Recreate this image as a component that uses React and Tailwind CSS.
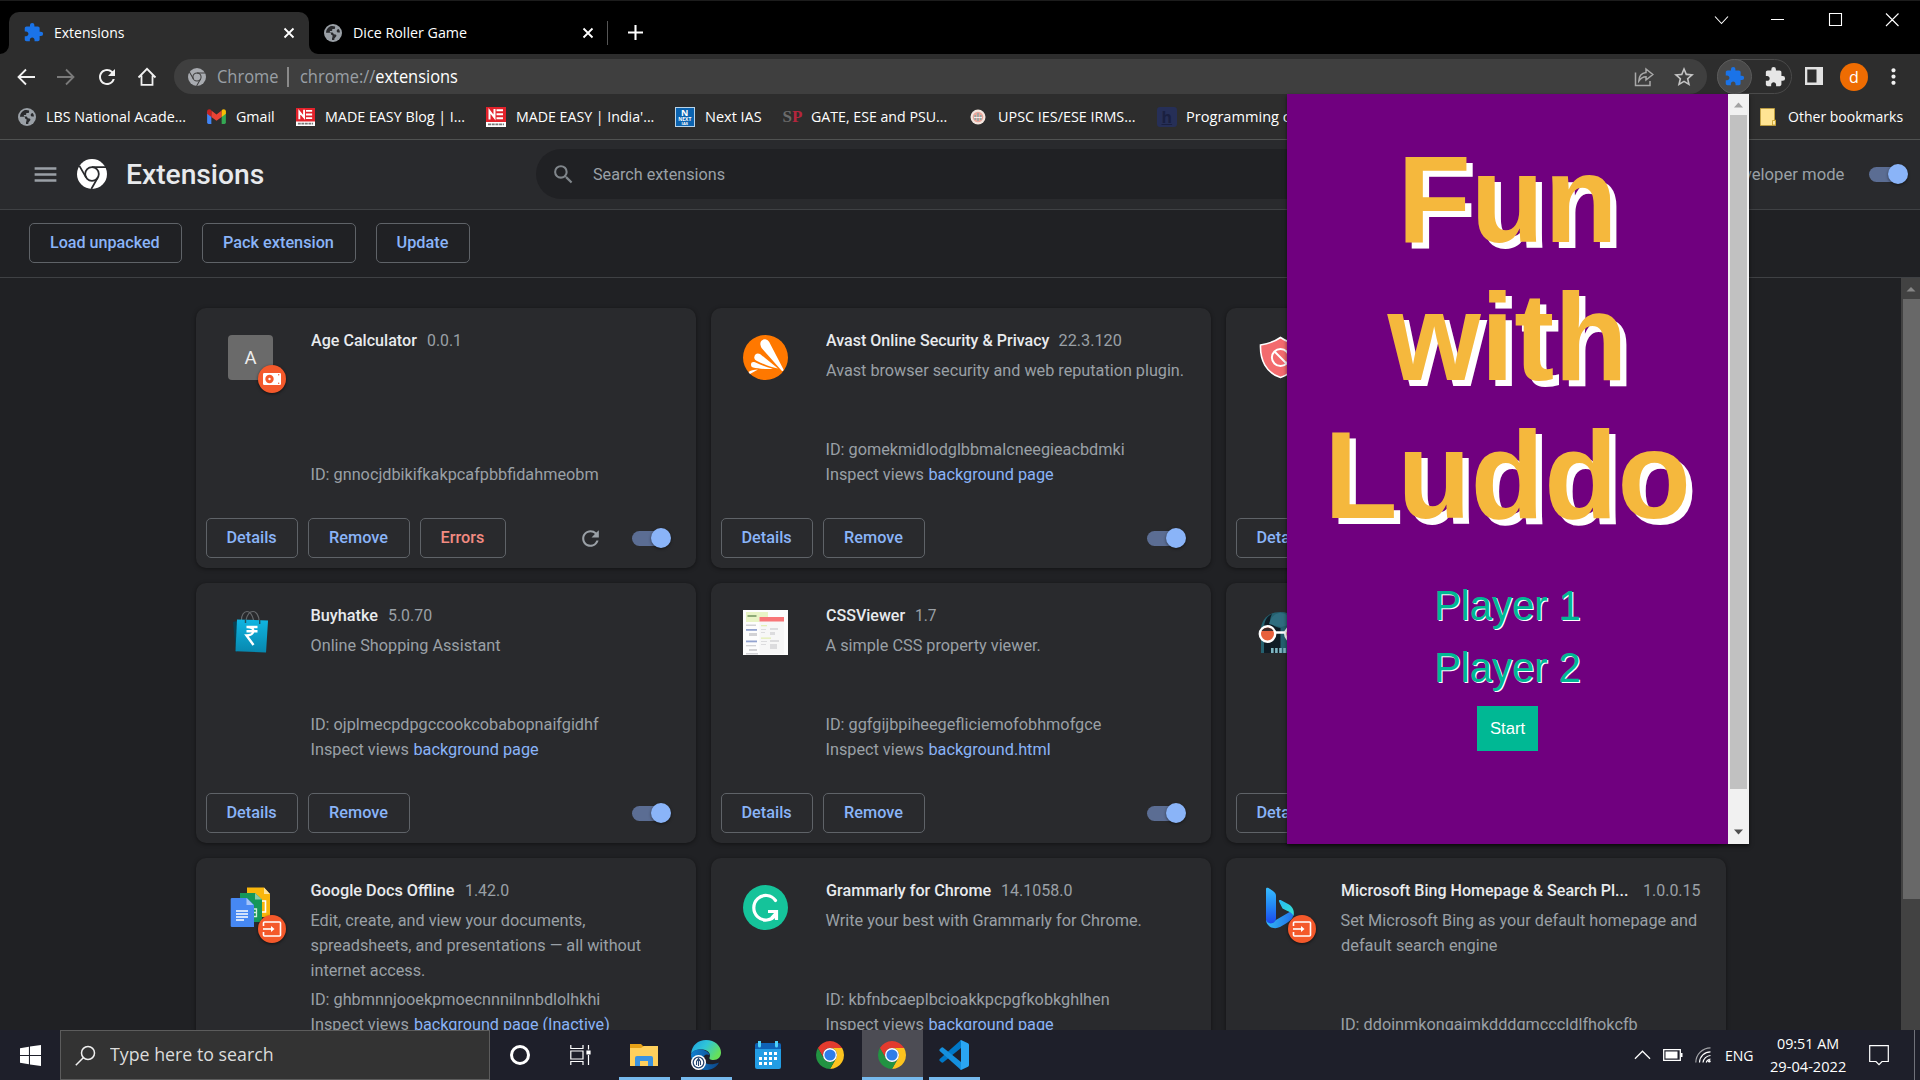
import React, { useLayoutEffect, useRef, useState } from "react";
import { MdExtension, MdRefresh, MdSearch, MdMenu, MdMoreVert, MdStarOutline } from "react-icons/md";

/* Single-line text condensed or widened to fill a given width. */
function Label({ w, className = "", children }) {
  const ref = useRef(null);
  const [scale, setScale] = useState(1);
  useLayoutEffect(() => {
    const natural = ref.current.offsetWidth;
    if (natural) setScale(w / natural);
  }, [w]);
  return (
    <span className={"block shrink-0 whitespace-pre " + className} style={{ width: w }}>
      <span ref={ref} className="inline-block origin-left" style={{ transform: `scaleX(${scale})` }}>
        {children}
      </span>
    </span>
  );
}

function ChromeLogo({ className }) {
  return (
    <svg viewBox="2 2 44 44" className={className}>
      <path fill="#e33b2e" d="M4.95 13A22 22 0 0 1 43.05 13H24A11 11 0 0 0 14.47 29.5Z" />
      <path fill="#fcc31e" d="M43.05 13A22 22 0 0 1 24 46L33.53 29.5A11 11 0 0 0 24 13Z" />
      <path fill="#229342" d="M24 46A22 22 0 0 1 4.95 13L14.47 29.5A11 11 0 0 0 33.53 29.5Z" />
      <circle cx="24" cy="24" r="11" fill="#fff" />
      <circle cx="24" cy="24" r="8.8" fill="#2f7de9" />
    </svg>
  );
}

function ChromeMono({ className, line }) {
  return (
    <svg viewBox="2 2 44 44" className={className}>
      <circle cx="24" cy="24" r="22" fill="currentColor" />
      <g fill="none" stroke={line} strokeWidth="2.6">
        <circle cx="24" cy="24" r="10" />
        <path d="M24 14H45M15.3 29L5.5 12M32.7 29L23 46" />
      </g>
    </svg>
  );
}

function Globe({ className = "" }) {
  return (
    <svg viewBox="0 0 18 18" className={className}>
      <circle cx="9" cy="9" r="9" fill="#9aa0a6" />
      <path
        fill="#292a2d"
        d="M6.2 2.3C3.600 3.500 2 6 2 8.700l3.600.1c1.300 0 1.500.8 1.500 1.500 0 .7.600.9 1.400.9v1.500c0 .7-.5 1-.5 1.600v1.600c.8.200 1.600.100 2.400-.1v-1.400l1.700-1.800c.6-.7.3-1.900-.7-2.100l-1.600-.3c-.4-1-.9-1.600-1.800-1.600H5.900V6.900h1.500c.6 0 .9-.4.900-1V5h1.500c.9 0 1.300-.6 1.300-1.300V2.500C9.500 1.800 7.800 1.700 6.200 2.300Z"
      />
      <path fill="#292a2d" d="M14.600 5c-1.200.3-1.900 1-1.900 1.900 0 1.100.8 1.600 2 1.600h1.200c0-1.300-.5-2.600-1.300-3.500Z" />
    </svg>
  );
}

function Toggle() {
  return (
    <div className="relative flex h-5 w-[39px] shrink-0 items-center">
      <div className="h-[15px] w-[35px] rounded-full bg-[#5b6d93]" />
      <div className="absolute top-0 right-0 size-5 rounded-full bg-[#8ab4f8] shadow-[0_1px_3px_rgba(0,0,0,0.5)]" />
    </div>
  );
}

function OutlineButton({ w, textW, children, tone = "text-[#8ab4f8]" }) {
  return (
    <button
      className={"flex h-10 shrink-0 items-center justify-center rounded-[5px] border border-[#5f6368] pr-px pb-px font-medium " + tone}
      style={{ width: w }}
    >
      <Label w={textW}>{children}</Label>
    </button>
  );
}

function MadeEasy({ tall }) {
  return (
    <svg viewBox="0 0 20 20" className={tall ? "h-5 w-5" : "h-[18px] w-[19px]"} preserveAspectRatio="none">
      <rect width="20" height="20" fill="#fff" />
      <rect width="20" height="15" fill="#e3222b" />
      <path d="M3.500 12.500V4L8.500 10.500V2M17 3.300H10.500M17 7.200H10.500M17 11.200H10.500" stroke="#fff" strokeWidth="2" fill="none" />
      <path d="M2 17.300H18" stroke="#777" strokeWidth="1.800" strokeDasharray="3 .7" />
    </svg>
  );
}

const bookmarks = [
  { icon: <Globe className="size-[18px]" />, gap: "mr-[9px]", text: "LBS National Acade...", w: 140 },
  {
    icon: (
      <svg viewBox="0 0 20 16" className="h-[15px] w-[19px]">
        <path fill="#4285f4" d="M0 2.500V14.500A1.500 1.500 0 0 0 1.500 16H4.500V6Z" />
        <path fill="#34a853" d="M20 2.500V14.500A1.500 1.500 0 0 1 18.500 16H15.500V6Z" />
        <path fill="#ea4335" d="M4.500 1.500L10 5.800L15.500 1.500V8.500L10 12.600L4.500 8.500Z" />
        <path fill="#c5221f" d="M0 2.500C0 .4 2.300-.7 4 .9L4.500 1.500V8.500L0 5Z" />
        <path fill="#fbbc04" d="M20 2.500C20 .4 17.700-.7 16 .9L15.500 1.500V8.500L20 5Z" />
      </svg>
    ),
    gap: "mr-[9px]", text: "Gmail", w: 39,
  },
  { icon: <MadeEasy />, gap: "mr-[10px]", text: "MADE EASY Blog | I...", w: 140 },
  { icon: <MadeEasy tall />, gap: "mr-[10px]", text: "MADE EASY | India'...", w: 138 },
  {
    icon: (
      <span className="flex h-5 w-5 flex-col items-center justify-center border border-[#b9d3e8] bg-[#0b63b0] font-bold leading-none text-white">
        <span className="text-[9px] leading-[9px]">N</span>
        <span className="text-[5px] leading-[5px]">NEXT</span>
        <span className="text-[4px] leading-[4px]">IAS</span>
      </span>
    ),
    gap: "mr-[10px]", text: "Next IAS", w: 57,
  },
  {
    icon: (
      <span className="font-['Liberation_Serif',serif] text-[17px] font-bold leading-none text-[#6b6b6b]">
        S<span className="text-[#b5253c]">P</span>
      </span>
    ),
    gap: "mr-[9px]", text: "GATE, ESE and PSU...", w: 136,
  },
  {
    icon: (
      <svg viewBox="0 0 16 16" className="size-4">
        <circle cx="8" cy="8" r="7.500" fill="#f3e6df" />
        <circle cx="8" cy="8" r="5.300" fill="#e9a79b" />
        <path d="M5.200 6V11M8 4V12M10.800 6V11" stroke="#7fa9a8" strokeWidth="1.300" />
        <path d="M4 8.500H12" stroke="#fff" strokeWidth=".8" />
      </svg>
    ),
    gap: "mr-[10px]", text: "UPSC IES/ESE IRMS...", w: 138,
  },
  {
    icon: (
      <span className="flex size-5 items-center justify-center rounded-[3px] bg-[#262f57] text-[16px] font-bold leading-none text-[#1a2040]">
        <span className="underline">h</span>
      </span>
    ),
    gap: "mr-[9px]", text: "Programming c", w: 104,
  },
];

function Badge({ kind }) {
  return (
    <div className="absolute top-[30px] left-[30px] flex size-7 items-center justify-center rounded-full bg-[#f4592b] shadow-[0_1px_3px_rgba(0,0,0,0.6)]">
      {kind === "unpacked" ? (
        <svg viewBox="0 0 18 12" className="h-3 w-[18px]">
          <rect width="18" height="12" rx="1.200" fill="#fff" />
          <circle cx="6.500" cy="6" r="4.200" fill="#f4592b" />
          <circle cx="6.500" cy="6" r="1.200" fill="#fff" />
          <circle cx="15.700" cy="1.800" r=".7" fill="#f4592b" />
          <circle cx="15.700" cy="10.200" r=".7" fill="#f4592b" />
        </svg>
      ) : (
        <svg viewBox="0 0 20 16" className="h-4 w-5" fill="none" stroke="#fff" strokeWidth="1.600">
          <path d="M1.500 5V2Q1.500 1 2.500 1H17.500Q18.500 1 18.500 2V14Q18.500 15 17.500 15H2.500Q1.500 15 1.500 14V11" />
          <path d="M1 8H10" />
          <path d="M9 5L12.500 8L9 11Z" fill="#fff" stroke="none" />
        </svg>
      )}
    </div>
  );
}

const icons = {
  age: (
    <div className="flex size-[45px] items-center justify-center rounded-[4px] bg-[#6a6a6a] pt-px text-[18.500px] text-[#eee]">A</div>
  ),
  avast: (
    <svg viewBox="0 0 45 45" className="size-[45px]">
      <circle cx="22.500" cy="22.500" r="22.500" fill="#ff7800" />
      <g fill="#fff">
        <path d="M17.500 10C16.500 6 20 3.600 23 4.600C25 5.200 26 6.500 27 8.500L40.500 34.500C40.500 36 39.500 36.500 38.500 35.500L19 13.500C18.200 12.500 17.800 11.500 17.500 10Z" />
        <path d="M11.300 22.500C11.300 19 14.500 17.500 17 19L35 33.500C30 33 22 30 14 26C12 25 11.300 24 11.300 22.500Z" />
        <path d="M8 29.500C8 27 10 26.500 12 27.300C18 30 24 32 30 33.800C23 34.500 15 33.500 10 32.500C8.500 32 8 31 8 29.500Z" />
        <path d="M5.500 37C7 35.500 11 34.500 15 34.500L7 39Z" />
      </g>
    </svg>
  ),
  shield: (
    <svg viewBox="0 0 45 45" className="size-[45px]">
      <path d="M22.500 2.500C16 7 9 9 2.500 10C2 25 8 38 22.500 42.500C37 38 43 25 42.500 10C36 9 29 7 22.500 2.500Z" fill="#f36b6e" stroke="#fff" strokeWidth="1.600" />
      <circle cx="22.500" cy="22.500" r="8.600" fill="none" stroke="#fff" strokeWidth="2" />
      <path d="M16.500 16.500L28.500 28.500" stroke="#fff" strokeWidth="2" />
    </svg>
  ),
  bag: (
    <svg viewBox="0 0 45 45" className="size-[45px]">
      <defs>
        <linearGradient id="bagFill" x1="0" y1="0" x2="0" y2="1">
          <stop offset="0" stopColor="#10b5e2" />
          <stop offset="1" stopColor="#0787ae" />
        </linearGradient>
      </defs>
      <path d="M5 12L9 11V42.500L8 42Z" fill="#0a3f50" />
      <path d="M13.500 12C13 4 16.500 1.500 19 1.500S24 4 25.500 10M18 10C19.500 3.500 22 1.500 25 1.500S31 5 31.300 12" fill="none" stroke="#66696c" strokeWidth="1.200" />
      <path d="M9 9.500L40 10.500L38 42.500L7.500 41.200Z" fill="url(#bagFill)" />
      <path d="M17.500 13V9M31.700 14V10" stroke="#23515f" strokeWidth="1.400" />
      <path d="M18.500 17H29.500M18.500 21.300H29.500M18.500 17C28 16.500 27.500 25.500 18.500 25.500L25.500 35" fill="none" stroke="#fff" strokeWidth="2.400" />
    </svg>
  ),
  css: (
    <svg viewBox="0 0 45 45" className="size-[45px]">
      <rect width="45" height="45" fill="#fdfdfd" />
      <rect x="3" y="2" width="22" height="10" fill="#e9f4c6" />
      <rect x="4.500" y="5" width="9" height="2" fill="#8fab79" />
      <g fill="#d2d2d5">
        <rect x="3" y="14.500" width="10" height="1.500" />
        <rect x="6" y="23" width="8" height="3" />
        <rect x="3" y="35" width="10" height="1.300" />
        <rect x="6" y="39" width="8" height="2" />
        <rect x="3" y="43" width="12" height="1.500" />
      </g>
      <rect x="3" y="19" width="11" height="1.800" fill="#93a3cf" />
      <rect x="3" y="30.500" width="11" height="1.800" fill="#93a3cf" />
      <rect x="16.500" y="7" width="24.500" height="37" fill="#f7f7f7" />
      <rect x="16.500" y="7" width="24.500" height="4.500" fill="#f87577" />
      <rect x="18" y="15" width="6" height="1.300" fill="#e3eeb4" />
      <rect x="18" y="27.500" width="10" height="1.300" fill="#e3eeb4" />
      <path fill="#dcdcde" d="M18 19H23V20H18ZM27 18H35V20H27ZM18 22H22V23H18ZM27 22H32V25H27ZM18 31H24V32H18ZM27 30H36V32H27ZM18 34H23V35H18ZM27 34H34V39H27Z" />
    </svg>
  ),
  skull: (
    <svg viewBox="0 0 45 45" className="size-[45px]">
      <path d="M3 43V20C3 8 12 2 22.500 2S42 8 42 20V43Z" fill="#24606f" />
      <path d="M6 43V22C5 12 9 6 14 4C10 12 13 16 22.500 18V43Z" fill="#0f1c25" />
      <path d="M11 14C13 6 18 3 22.500 3S32 6 35 14L23 17Z" fill="#2f6d7f" />
      <path d="M16 22.500H28" stroke="#fff" strokeWidth="2.500" />
      <circle cx="9.500" cy="24" r="7.700" fill="#e7603c" stroke="#fff" strokeWidth="2.400" />
      <path d="M3.500 21C6 16.500 13 16.500 15.500 21Z" fill="#3b2a2a" />
      <circle cx="35" cy="24" r="7.700" fill="#e7603c" stroke="#fff" strokeWidth="2.400" />
      <path d="M13 40.500H32" stroke="#7fb6c2" strokeWidth="5" strokeDasharray="2.600 1.500" />
    </svg>
  ),
  docs: (
    <svg viewBox="0 0 45 45" className="size-[45px]">
      <path d="M19 2.500H36L42 9V32H19Z" fill="#f9b60c" />
      <path d="M36 2.500L42 9H36Z" fill="#fde299" />
      <path d="M34 16H37.500V27H34" fill="none" stroke="#fff" strokeWidth="1.600" />
      <path d="M12 8H27L34 14.500V37H12Z" fill="#15975a" />
      <path d="M27 8L34 14.500H27Z" fill="#87c9a9" />
      <path d="M24 24H28.500V31.500H24M24 27.500H28.500" fill="none" stroke="#d2eedd" strokeWidth="1.300" />
      <path d="M4 13H19L26 20V42H4Q2.700 42 2.700 41V14Q2.700 13 4 13Z" fill="#4688f3" />
      <path d="M18.500 13L25.500 20H18.500Z" fill="#a5c5fa" />
      <path d="M8 26H20M8 29H20M8 32H20M8 35H16" stroke="#fff" strokeWidth="1.500" />
    </svg>
  ),
  grammarly: (
    <svg viewBox="0 0 45 45" className="size-[45px]">
      <circle cx="22.500" cy="22.500" r="22.500" fill="#15c39a" />
      <path d="M32.500 15.500A12 12.300 0 1 0 32.500 30" fill="none" stroke="#fff" strokeWidth="3.200" strokeLinecap="round" />
      <path d="M25 26.500H33.500V35" fill="none" stroke="#fff" strokeWidth="3.200" />
      <path d="M28.500 33L34 27" stroke="#fff" strokeWidth="3" />
    </svg>
  ),
  bing: (
    <svg viewBox="0 0 45 45" className="size-[45px]">
      <defs>
        <linearGradient id="bingA" x1="0" y1="0" x2="0" y2="1">
          <stop offset="0" stopColor="#37bdff" />
          <stop offset=".5" stopColor="#2388f5" />
          <stop offset="1" stopColor="#1b48ef" />
        </linearGradient>
        <linearGradient id="bingB" x1="0" y1="0" x2="1" y2="0">
          <stop offset="0" stopColor="#30b9f3" />
          <stop offset="1" stopColor="#2370eb" />
        </linearGradient>
        <linearGradient id="bingC" x1="0" y1="0" x2="1" y2="1">
          <stop offset="0" stopColor="#26b8f4" />
          <stop offset="1" stopColor="#37e5cf" />
        </linearGradient>
      </defs>
      <path d="M8 34C10 38 14 38 17 35.500L35 25C37 32 33 35.500 28 38.500L22 42C16 45 8 42 8 34Z" fill="url(#bingB)" />
      <path d="M8 4C8 2.500 9.500 2.500 10.500 3L15 6C17 7.500 18 9 18 11V33C18 40 8 40 8 34Z" fill="url(#bingA)" />
      <path d="M21 16.500C20.500 15 22 14.700 23.500 15.500L31 19.500C35 22 36.500 26 35.500 31C34.500 28 32 27 29 25.700L26.500 24.500C25 24 24.500 23.500 24 22.500Z" fill="url(#bingC)" />
    </svg>
  ),
};

const extensions = [
  { icon: "age", badge: "unpacked", name: "Age Calculator", nw: 106, version: "0.0.1", vw: 35, id: "gnnocjdbikifkakpcafpbbfidahmeobm", iw: 288, errors: true },
  { icon: "avast", name: "Avast Online Security & Privacy", nw: 223, version: "22.3.120", vw: 63, desc: [["Avast browser security and web reputation plugin.", 358]], id: "gomekmidlodglbbmalcneegieacbdmki", iw: 299, view: "background page", bw: 125 },
  { icon: "shield" },
  { icon: "bag", name: "Buyhatke", nw: 67, version: "5.0.70", vw: 44, desc: [["Online Shopping Assistant", 190]], id: "ojplmecpdpgccookcobabopnaifgidhf", iw: 288, view: "background page", bw: 125 },
  { icon: "css", name: "CSSViewer", nw: 79, version: "1.7", vw: 22, desc: [["A simple CSS property viewer.", 215]], id: "ggfgijbpiheegefliciemofobhmofgce", iw: 276, view: "background.html", bw: 122 },
  { icon: "skull" },
  { icon: "docs", badge: "external", name: "Google Docs Offline", nw: 144, version: "1.42.0", vw: 44, desc: [["Edit, create, and view your documents,", 275], ["spreadsheets, and presentations — all without", 331], ["internet access.", 115]], id: "ghbmnnjooekpmoecnnnilnnbdlolhkhi", iw: 290, view: "background page (Inactive)", bw: 196 },
  { icon: "grammarly", name: "Grammarly for Chrome", nw: 165, version: "14.1058.0", vw: 72, desc: [["Write your best with Grammarly for Chrome.", 316]], id: "kbfnbcaeplbcioakkpcpgfkobkghlhen", iw: 284, view: "background page", bw: 125 },
  { icon: "bing", badge: "external", name: "Microsoft Bing Homepage & Search Pl...", nw: 287, wide: true, version: "1.0.0.15", vw: 58, desc: [["Set Microsoft Bing as your default homepage and", 357], ["default search engine", 156]], id: "ddojnmkongaimkdddgmcccldlfhokcfb", iw: 297, },
];

function ExtensionCard({ ext }) {
  return (
    <article className="flex h-[260px] w-[500px] flex-col rounded-[10px] bg-[#292a2d] shadow-[0_1px_4px_rgba(0,0,0,0.45)]">
      <div className="flex h-[179px] pt-5 pl-8">
        <div className="relative mt-[7px] size-[45px] shrink-0">
          {icons[ext.icon]}
          {ext.badge && <Badge kind={ext.badge} />}
        </div>
        <div className="ml-[37.500px] flex flex-col">
          {ext.name && (
            <div className={"flex " + (ext.wide ? "gap-[15px]" : "gap-[10px]")}>
              <Label w={ext.nw} className="font-medium text-[#e8eaed]">{ext.name}</Label>
              <Label w={ext.vw}>{ext.version}</Label>
            </div>
          )}
          <div className="mt-[5px]">
            {(ext.desc || []).map(([line, w]) => (
              <Label key={line} w={w}>{line}</Label>
            ))}
          </div>
          <div className="mt-auto">
            {ext.id && <Label w={ext.iw}>{"ID: " + ext.id}</Label>}
            {ext.view && (
              <div className="flex">
                <Label w={98}>Inspect views</Label>
                <Label w={ext.bw} className="ml-[5px] text-[#8ab4f8]">{ext.view}</Label>
              </div>
            )}
          </div>
        </div>
      </div>
      <div className="mt-[31px] flex h-10 items-center gap-[10px] pr-[25px] pl-[10px]">
        <OutlineButton w={92} textW={50}>Details</OutlineButton>
        <OutlineButton w={102} textW={59}>Remove</OutlineButton>
        {ext.errors && <OutlineButton w={86} textW={44} tone="text-[#f28b82]">Errors</OutlineButton>}
        <div className="ml-auto flex items-center gap-[29px]">
          {ext.errors && <MdRefresh className="size-[25px] text-[#9aa0a6]" />}
          <Toggle />
        </div>
      </div>
    </article>
  );
}

function TabClose() {
  return (
    <svg viewBox="0 0 12 12" className="size-3" stroke="#fff" strokeWidth="1.800">
      <path d="M1.500 1.500L10.500 10.500M10.500 1.500L1.500 10.500" />
    </svg>
  );
}

function TabStrip() {
  return (
    <div className="flex h-[54px] border-t border-[#1c1c1c] bg-black text-[15px] text-white">
      <div className="relative mt-[11px] ml-[9px] flex w-[300px] items-center rounded-t-[10px] bg-[#2d2d2d] pb-px pl-[14px]">
        <svg viewBox="0 0 10 10" className="absolute bottom-0 -left-[9px] size-[9px]"><path fill="#2d2d2d" d="M10 0V10H0A10 10 0 0 0 10 0Z" /></svg>
        <svg viewBox="0 0 10 10" className="absolute -right-[9px] bottom-0 size-[9px]"><path fill="#2d2d2d" d="M0 0V10H10A10 10 0 0 1 0 0Z" /></svg>
        <MdExtension className="size-[21px] text-[#1a73e8]" />
        <Label w={70} className="mb-px ml-[10px]">Extensions</Label>
        <span className="ml-[159px]"><TabClose /></span>
      </div>
      <div className="mt-[11px] flex items-center pb-px pl-[15px]">
        <Globe className="size-[18px]" />
        <Label w={114} className="mb-px ml-[11px]">Dice Roller Game</Label>
        <span className="ml-[115px]"><TabClose /></span>
        <span className="ml-[13px] h-6 w-px bg-[#555]" />
        <svg viewBox="0 0 16 16" className="ml-5 size-[15px]" stroke="#fff" strokeWidth="2.200"><path d="M8 0V16M0 8H16" /></svg>
      </div>
      <svg viewBox="0 0 190 16" className="mt-[11px] mr-[21px] ml-auto h-4 w-[190px]" fill="none" stroke="#fff" strokeWidth="1.100">
        <path d="M6 4.500L12.500 11.500L19 4.500M62 7.500H75M120.500 1.500H132.500V13.500H120.500ZM177 1.500L189.500 14M189.500 1.500L177 14" />
      </svg>
    </div>
  );
}

function AddressBar() {
  return (
    <div className="flex h-10 items-start bg-[#2d2d2d] pt-[5px]">
      <div className="flex h-[35px] w-[174px] items-center pl-4">
        <svg viewBox="0 0 20 20" className="size-5" fill="none" stroke="#f1f1f1" strokeWidth="1.800"><path d="M19 10H3M10 2.500L2.500 10L10 17.500" /></svg>
        <svg viewBox="0 0 20 20" className="ml-5 size-5" fill="none" stroke="#7a7a7a" strokeWidth="1.800"><path d="M1 10H17M10 2.500L17.500 10L10 17.500" /></svg>
        <MdRefresh className="ml-[18.500px] size-6 text-[#f1f1f1]" />
        <svg viewBox="0 0 20 20" className="ml-[18px] size-5" fill="none" stroke="#f1f1f1" strokeWidth="1.800"><path d="M1.500 10.500L10 1.800L18.500 10.500M4.500 8.500V17.800H15.500V8.500" /></svg>
      </div>
      <div className="flex h-[35px] w-[1533px] items-center rounded-full bg-[#3f3f3f] pr-[11px] pl-[14px] text-[17.500px] text-[#9aa0a6]">
        <ChromeMono className="size-[18px] text-[#a8abb0]" line="#3f3f3f" />
        <Label w={61} className="ml-[10.500px]">Chrome</Label>
        <span className="ml-[9px] h-5 w-[2px] bg-[#8a8a8a]" />
        <Label w={157.5} className="ml-[11.500px]">chrome://<span className="text-white">extensions</span></Label>
        <svg viewBox="0 0 20 20" className="ml-auto size-5" fill="none" stroke="#a9a9a9" strokeWidth="1.500">
          <path d="M1.500 5.500V18.500H16V14" />
          <path d="M12 5.500V2L18.800 7.500L12 13V9.800C8.500 9.800 6.500 11.500 4.800 14C5 9.500 7.500 6 12 5.500Z" />
        </svg>
        <MdStarOutline className="ml-[18px] size-6 text-[#c4c4c4]" />
      </div>
      <div className="ml-[10px] flex h-[35px] w-[75px] items-center rounded-full border border-[#4a4a4a]">
        <span className="-ml-px flex h-[35px] w-[35px] items-center justify-center rounded-full border border-[#5a5a5a] bg-[#494949]"><MdExtension className="size-[21px] text-[#1a73e8]" /></span>
        <MdExtension className="ml-[12px] size-[22px] text-[#e6e6e6]" />
      </div>
      <svg viewBox="0 0 18 18" className="mt-2 ml-[13px] size-[18px]"><path fill="#e1e1e1" fillRule="evenodd" d="M0 0H18V18H0ZM2.300 2.500V15.500H11.500V2.500Z" /></svg>
      <span className="mt-1 ml-[17px] flex size-7 items-center justify-center rounded-full bg-[#ee6c02] text-[16px] text-white">d</span>
      <MdMoreVert className="mt-[5px] ml-[13px] size-[25px] text-[#f1f1f1]" />
    </div>
  );
}

function BookmarksBar() {
  return (
    <div className="flex h-[46px] items-center gap-[20.700px] border-b border-[#505251] bg-[#2d2d2d] pl-[17px] text-[15px] text-white">
      {bookmarks.map((b) => (
        <div key={b.text} className="flex shrink-0 items-center">
          <span className={"flex w-[20px] shrink-0 items-center justify-center " + b.gap}>{b.icon}</span>
          <Label w={b.w}>{b.text}</Label>
        </div>
      ))}
      <div className="mr-[17px] ml-auto flex items-center">
        <svg viewBox="0 0 16 18" className="mr-3 h-[18px] w-4"><path fill="#ffe493" stroke="#c9a437" strokeWidth=".8" d="M.4.4H14.500V12H15.600V17.600H.4Z" /><path d="M12.500 17V12.500H15.500V17Z" fill="#ffe9a5" stroke="#c59c26" strokeWidth=".8" /></svg>
        <Label w={115}>Other bookmarks</Label>
      </div>
    </div>
  );
}

function LuddoPopup() {
  return (
    <aside className="absolute top-[94px] left-[1287px] flex h-[750px] w-[462px] bg-[#70007f] font-['Liberation_Sans',Arial,sans-serif] shadow-[0_2px_4px_rgba(0,0,0,0.6)]">
      <div className="flex flex-1 flex-col items-center">
        <h1 className="mt-[35px] text-center text-[120px] leading-[138px] font-bold text-[#f5b83d] [text-shadow:6.250px_6px_#fff]">
          <span className="block scale-y-[1.04]">Fun</span>
          <span className="block scale-y-[1.04]">with</span>
          <span className="block scale-y-[1.04]">Luddo</span>
        </h1>
        <p className="mt-[39px] scale-y-[1.04] text-[40px] leading-[46px] text-[#00b894] [text-shadow:1.250px_1.250px_#fff]">Player 1</p>
        <p className="mt-4 scale-y-[1.04] text-[40px] leading-[46px] text-[#00b894] [text-shadow:1.250px_1.250px_#fff]">Player 2</p>
        <button className="mt-[16px] h-[45px] w-[61px] bg-[#00b894] text-[16.670px] text-white">Start</button>
      </div>
      <div className="flex w-[21px] flex-col items-center bg-[#f1f1f1]">
        <svg viewBox="0 0 21 21" className="h-[21px]"><path d="M6 13.500L10.500 8.500L15 13.500Z" fill="#a3a3a3" /></svg>
        <div className="h-[674px] w-[17px] bg-[#c1c1c1]" />
        <svg viewBox="0 0 21 21" className="mt-auto mb-px h-[21px]"><path d="M6 7.500L10.500 12.500L15 7.500Z" fill="#505050" /></svg>
      </div>
    </aside>
  );
}

function TaskItem({ children, className = "", line = "w-0" }) {
  return (
    <div className={"flex h-[50px] flex-col items-center justify-center " + className}>
      <div className="mt-[3px] flex flex-1 items-center">{children}</div>
      <div className={"h-[3px] bg-[#76b9ed] " + line} />
    </div>
  );
}

function Taskbar() {
  return (
    <footer className="flex h-[50px] bg-[#1e1f2a] text-white">
      <div className="flex w-[60px] items-center justify-center">
        <svg viewBox="0 0 20 20" className="size-[21px]" fill="#fff"><path d="M0 3L8.500 1.700V9.500H0ZM9.500 1.500L20 0V9.500H9.500ZM0 10.500H8.500V18.300L0 17ZM9.500 10.500H20V20L9.500 18.500Z" /></svg>
      </div>
      <div className="flex w-[430px] items-center border border-[#5c5c5c] bg-[#333] pl-[14px] text-[18.750px] text-[#dcdcdc]">
        <svg viewBox="0 0 21 21" className="size-[21px]" fill="none" stroke="#f0f0f0" strokeWidth="1.500"><circle cx="13" cy="8" r="6.500" /><path d="M8.500 12.500L.8 20.200" /></svg>
        <Label w={164} className="mb-px ml-[14px]">Type here to search</Label>
      </div>
      <TaskItem className="w-[60px]"><span className="block size-5 rounded-full border-[3px] border-white" /></TaskItem>
      <TaskItem className="w-[60px]">
        <svg viewBox="0 0 21 20" className="h-5 w-[21px]" fill="none" stroke="#fff" strokeWidth="1.200"><path d="M.8 0V3.500H13V0M.8 20V16.500H13V20M.8 6H13V14H.8ZM18.500 0V4.500M18.500 10V20" /><path d="M17 6H20V9H17Z" fill="#fff" /></svg>
      </TaskItem>
      <TaskItem className="ml-[9px] w-[51px]" line="w-[51px]">
        <svg viewBox="0 0 28 24" className="mr-px h-6 w-7">
          <path d="M0 1H11L13 3H28V7H0Z" fill="#e6a117" />
          <path d="M0 5H11L14 3H28V23H0Z" fill="#ffd05c" />
          <path d="M5 23V15Q5 13 7 13H21Q23 13 23 15V23H18V18H10V23Z" fill="#3b93e0" />
        </svg>
      </TaskItem>
      <TaskItem className="ml-[11px] w-[51px]" line="w-[51px]">
        <svg viewBox="0 0 30 30" className="mr-[2px] size-[30px]">
          <defs>
            <linearGradient id="edgeTop" x1="0" x2="1" y1="0" y2=".5"><stop offset="0" stopColor="#1d9ee0" /><stop offset=".5" stopColor="#2fc5d8" /><stop offset="1" stopColor="#66e05a" /></linearGradient>
            <linearGradient id="edgeLow" x1="0" x2="1"><stop offset="0" stopColor="#0f7fd0" /><stop offset="1" stopColor="#0d4688" /></linearGradient>
          </defs>
          <path d="M0 14C1 5 7 0 15 0C24 0 30 6 30 12.500C30 17 27 20 22.500 20C19 20 18 18.500 18.500 17.500C20 15 18.500 10.500 12 9.500C6 9 1.500 11 0 14Z" fill="url(#edgeTop)" />
          <path d="M0 14C2 10 6 9 10 9.500C15 10 19 13 18.500 15.500C16 13 12 15 12 19C12 24 20 26 28 22.500C25 28 20 30 15 30C6 30 0 23 0 14Z" fill="url(#edgeLow)" />
          <circle cx="7.500" cy="22.500" r="7.500" fill="#fff" />
          <circle cx="7.500" cy="22.500" r="5.300" fill="none" stroke="#27456f" strokeWidth="1.300" />
          <path d="M5.500 25V21.500L7.500 18.500L9.500 21.500V25M7.500 19V26" fill="none" stroke="#27456f" strokeWidth="1.100" />
        </svg>
      </TaskItem>
      <TaskItem className="ml-[6px] w-[60px]">
        <svg viewBox="0 0 26 28" className="h-7 w-[26px]">
          <path d="M0 4Q0 2 2 2H24Q26 2 26 4V10H0Z" fill="#0f62b5" />
          <path d="M0 8H26V26Q26 28 24 28H2Q0 28 0 26Z" fill="#239de4" />
          <path d="M4.500 0V5M21.500 0V5" stroke="#4fd3fa" strokeWidth="3" strokeLinecap="round" />
          <path d="M9 12.500H22.500M4 17.500H22.500M4 22.500H18" stroke="#fff" strokeWidth="3" strokeDasharray="3 2" />
        </svg>
      </TaskItem>
      <TaskItem className="w-[64px]"><ChromeLogo className="size-[28px]" /></TaskItem>
      <TaskItem className="w-[61px] bg-[#4c4c54]" line="w-[61px]"><ChromeLogo className="mr-px size-[28px]" /></TaskItem>
      <TaskItem className="ml-[6px] w-[51px]" line="w-[51px]">
        <svg viewBox="0 0 30 30" className="mr-px size-[30px]">
          <path d="M22 0V8L4 22.500Q3 23 2 22L.5 20.500Q0 19.800.7 19Z" fill="#0078c8" />
          <path d="M22 30V22L4 7.500Q3 7 2 8L.5 9.500Q0 10.200.7 11Z" fill="#1590de" />
          <path d="M22 0L29 3.300Q30 4 30 5V25Q30 26 29 26.700L22 30Q21 29.500 22 28V2Q21 .5 22 0Z" fill="#2aa5f2" />
        </svg>
      </TaskItem>
      <div className="ml-auto flex items-center text-[15px]">
        <svg viewBox="0 0 18 10" className="h-[10px] w-[17px]" fill="none" stroke="#fff" strokeWidth="1.300"><path d="M1 9L9 1L17 9" /></svg>
        <svg viewBox="0 0 20 12" className="ml-3 h-3 w-5"><path d="M.7.7H17.300V11.300H.7Z" fill="none" stroke="#fff" strokeWidth="1.300" /><path d="M2.500 2.500H14.500V9.500H2.500ZM18 4H19.500V8H18Z" fill="#fff" /></svg>
        <svg viewBox="0 0 16 16" className="ml-3 size-4" fill="none" stroke="#fff" strokeWidth="1.200"><path d="M.8 15.500A15 15 0 0 1 15.500.8" opacity=".6" /><path d="M4.500 15.500A11 11 0 0 1 15.500 4.800M8 15.500A8 8 0 0 1 15.500 8.500M11.200 15.500A5 5 0 0 1 15.500 12" /><circle cx="14.300" cy="14.300" r="1.300" fill="#fff" stroke="none" /></svg>
        <Label w={29} className="ml-[14px]">ENG</Label>
        <div className="ml-4 flex w-[76px] flex-col items-center pb-px leading-[23px]">
          <Label w={62}>09:51 AM</Label>
          <Label w={76}>29-04-2022</Label>
        </div>
        <svg viewBox="0 0 20 21" className="ml-[23px] h-[21px] w-5" fill="none" stroke="#fff" strokeWidth="1.200"><path d="M.7.7H19.300V16.500H13L10 19.700L7 16.500H.7Z" /></svg>
        <span className="mr-[5px] ml-[25px] h-[50px] w-px bg-[#70717a]" />
      </div>
    </footer>
  );
}

export default function App() {
  return (
    <div className="relative flex h-[1080px] w-[1920px] flex-col overflow-hidden bg-[#202124] font-['Open_Sans','Noto_Sans',sans-serif]">
      <TabStrip />
      <AddressBar />
      <BookmarksBar />
      <div className="flex min-h-0 flex-1 flex-col font-[Roboto,sans-serif] text-[16.250px] leading-[25px] text-[#9aa0a6]">
        <header className="flex h-[70px] shrink-0 items-center border-b border-[#3f4144] bg-[#292a2d] pr-3 pb-px pl-[31px]">
          <MdMenu className="size-[29px]" />
          <ChromeMono className="ml-[17px] size-[30px] text-white" line="#292a2d" />
          <Label w={138.5} className="ml-[19px] text-[27.500px] font-medium text-[#e8eaed]">Extensions</Label>
          <div className="ml-[271.500px] flex h-[50px] w-[850px] items-center rounded-full bg-[#202124] pl-[15px]">
            <MdSearch className="size-[25px] text-[#80868b]" />
            <Label w={132.5} className="ml-[17px]">Search extensions</Label>
          </div>
          <Label w={120} className="ml-auto">Developer mode</Label>
          <div className="ml-[25px]"><Toggle /></div>
        </header>
        <div className="flex h-[68px] shrink-0 items-start gap-5 border-b border-[#3f4144] pt-[13px] pl-[29px]">
          <OutlineButton w={153} textW={110}>Load unpacked</OutlineButton>
          <OutlineButton w={154} textW={111}>Pack extension</OutlineButton>
          <OutlineButton w={94} textW={52}>Update</OutlineButton>
        </div>
        <div className="flex min-h-0 flex-1">
          <main className="grid flex-1 grid-cols-[500px_500px_500px] content-start gap-[15px] overflow-hidden pt-[30px] pl-[196px]">
            {extensions.map((ext) => <ExtensionCard key={ext.icon} ext={ext} />)}
          </main>
          <div className="flex w-[19px] flex-col items-end bg-[#424242]">
            <svg viewBox="0 0 19 21" className="h-[21px] w-[19px]"><path d="M5.500 13.500L10 9L14.500 13.500Z" fill="#868686" /></svg>
            <div className="h-[600px] w-[17px] bg-[#686868]" />
          </div>
        </div>
      </div>
      <Taskbar />
      <LuddoPopup />
    </div>
  );
}
